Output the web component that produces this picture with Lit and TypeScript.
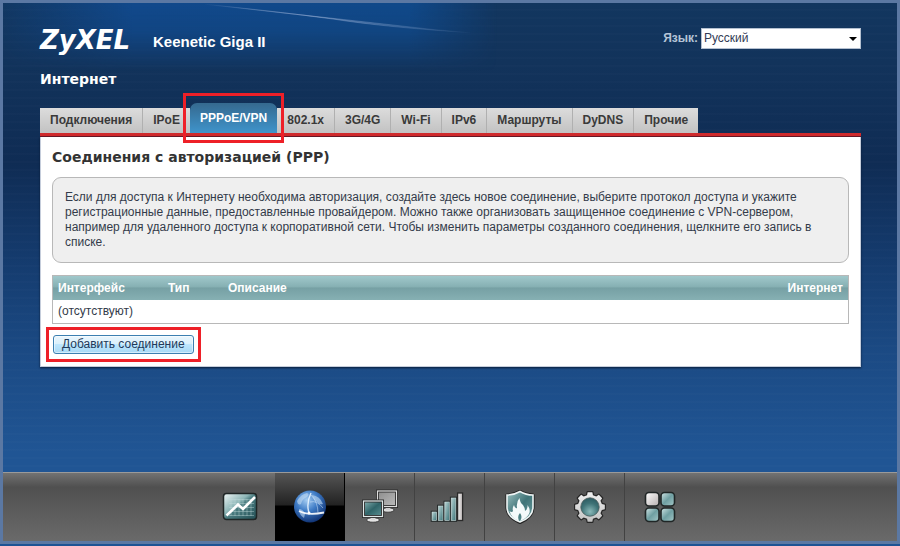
import { LitElement, html, css, svg, nothing } from "lit";
import { customElement, state } from "lit/decorators.js";
import { classMap } from "lit/directives/class-map.js";

const TABS = ["Подключения", "IPoE", "PPPoE/VPN", "802.1x", "3G/4G", "Wi-Fi", "IPv6", "Маршруты", "DyDNS", "Прочие"];

const gearPath = (() => {
  const n = 8;
  const pts: string[] = [];
  const at = (r: number, deg: number) => {
    const a = (deg * Math.PI) / 180;
    return `${(20 + r * Math.cos(a)).toFixed(2)} ${(20 + r * Math.sin(a)).toFixed(2)}`;
  };
  for (let i = 0; i < n; i++) {
    const c = (i * 360) / n;
    pts.push(at(12.2, c - 14), at(15, c - 9), at(15, c + 9), at(12.2, c + 14));
  }
  return "M" + pts.join("L") + "Z";
})();

const ICONS = [
  {
    label: "Системный монитор",
    art: svg`
      <defs><linearGradient id="m" x1="0" y1="0" x2="1" y2="1"><stop offset="0" stop-color="#f2f8f8"/><stop offset=".4" stop-color="#8db6b7"/><stop offset=".5" stop-color="#4a7c80"/><stop offset="1" stop-color="#234f55"/></linearGradient></defs>
      <rect x="3.5" y="6.5" width="33" height="26" rx="3" fill="url(#m)" stroke="#1f2626" stroke-width="1.5"/>
      <path d="M11 12v17M15 12v17M19 12v17M23 12v17M27 12v17M31 12v17M9 12.500h25M9 16.500h25M9 20.500h25M9 24.500h25M9 28.500h25" stroke="#c5dede" stroke-opacity=".5" stroke-width=".8" fill="none"/>
      <path d="M6.500 28.500L18 17.500L23 22L35 10" fill="none" stroke="#fff" stroke-width="2.600"/>`,
  },
  {
    label: "Интернет",
    art: svg`
      <defs><radialGradient id="g" cx=".4" cy=".3" r=".75"><stop offset="0" stop-color="#a5cdf2"/><stop offset=".45" stop-color="#3f7cc6"/><stop offset="1" stop-color="#0c2c6c"/></radialGradient></defs>
      <circle cx="20" cy="19.500" r="16" fill="url(#g)"/>
      <path d="M7 14Q11 7 17 6Q20 7 17 10Q12 12 11 17Q8 19 7 14ZM22 8Q30 9 33 17Q29 18 27 15Q23 13 22 8ZM9 22Q13 22 15 27L14 31Q9 28 9 22Z" fill="#c3dcf4" fill-opacity=".6"/>
      <path d="M21 6Q16 16 19 26" fill="none" stroke="#e8f4ff" stroke-width="1.400" stroke-opacity=".9"/>
      <path d="M9 24Q18 29 34 25.500" fill="none" stroke="#fff" stroke-width="1.800" stroke-opacity=".9"/>
      <path d="M21 8Q28 15 28 26M20 15Q27 13 33 21" fill="none" stroke="#d0e5fa" stroke-width=".9" stroke-opacity=".6"/>
      <circle cx="19" cy="26" r="1.500" fill="#fff"/>`,
  },
  {
    label: "Домашняя сеть",
    art: svg`
      <defs>
        <linearGradient id="a" x1="0" y1="0" x2="1" y2="1"><stop offset="0" stop-color="#8b8b8b"/><stop offset="1" stop-color="#bdbdbd"/></linearGradient>
        <linearGradient id="b" x1="0" y1="0" x2="1" y2="1"><stop offset="0" stop-color="#8ab5b5"/><stop offset=".5" stop-color="#2f6468"/><stop offset="1" stop-color="#5f9496"/></linearGradient>
      </defs>
      <ellipse cx="28" cy="23" rx="6" ry="2.200" fill="#ddd" stroke="#303030" stroke-width=".8"/>
      <rect x="26" y="20" width="4" height="3" fill="#d0d0d0"/>
      <rect x="17.500" y="4" width="19" height="15.500" fill="url(#a)" stroke="#2c2c2c" stroke-width="3"/>
      <rect x="17.500" y="4" width="19" height="15.500" fill="none" stroke="#dedede" stroke-width="1.200"/>
      <ellipse cx="13" cy="33" rx="6.500" ry="2.200" fill="#e4e4e4" stroke="#303030" stroke-width=".8"/>
      <rect x="11" y="30" width="4" height="3" fill="#d8d8d8"/>
      <rect x="3.500" y="14" width="19" height="15.500" fill="url(#b)" stroke="#2c2c2c" stroke-width="3"/>
      <rect x="3.500" y="14" width="19" height="15.500" fill="none" stroke="#dfe8e8" stroke-width="1.200"/>`,
  },
  {
    label: "Сеть Wi-Fi",
    art: svg`
      <defs>
        <linearGradient id="s" x1="0" y1="0" x2="1" y2="1"><stop offset="0" stop-color="#b8d4d4"/><stop offset="1" stop-color="#3d7478"/></linearGradient>
        <linearGradient id="t" x1="0" y1="0" x2="1" y2="0"><stop offset="0" stop-color="#f2f2f2"/><stop offset="1" stop-color="#bcb6b6"/></linearGradient>
      </defs>
      ${[[2, 25], [8.4, 19], [14.8, 15], [21.2, 11]].map(
        ([x, y]) => svg`<rect x=${x} y=${y} width="4.600" height=${33.5 - y} fill="url(#s)" stroke="#242a2a" stroke-width="2.600"/><rect x=${x} y=${y} width="4.600" height=${33.5 - y} fill="url(#s)" stroke="#cfe0e0" stroke-width=".6"/>`
      )}
      <rect x="27.600" y="6" width="5" height="27.500" fill="url(#t)" stroke="#2a2a2a" stroke-width="1.300"/>`,
  },
  {
    label: "Безопасность",
    art: svg`
      <defs><linearGradient id="h" x1="0" y1="0" x2="1" y2="1"><stop offset="0" stop-color="#9cc0c0"/><stop offset=".5" stop-color="#3f7478"/><stop offset="1" stop-color="#6fa0a2"/></linearGradient></defs>
      <path d="M20 4.500Q26 8 33 8V20Q33 30 20 35.500Q7 30 7 20V8Q14 8 20 4.500Z" fill="url(#h)" stroke="#222" stroke-width="3.200" stroke-linejoin="round"/>
      <path d="M20 4.500Q26 8 33 8V20Q33 30 20 35Q7 30 7 20V8Q14 8 20 4.500Z" fill="url(#h)" stroke="#eef4f4" stroke-width="1.600"/>
      <path d="M19 34Q11 31 9.500 24Q12 26 13 24Q12 21 14 18Q15 22 17 21Q16 15 19.500 11Q20 16 23 18Q25 21 25 24Q28 22 27.500 18Q31 23 29 27Q26 32 20 34Q23 30 20 26Q17 29 19 34Z" fill="#f4fafa"/>`,
  },
  {
    label: "Система",
    art: svg`
      <defs>
        <radialGradient id="c" cx=".5" cy=".75" r=".75"><stop offset="0" stop-color="#8ab9b9"/><stop offset=".6" stop-color="#3f7377"/><stop offset="1" stop-color="#2b5a60"/></radialGradient>
        <linearGradient id="d" x1="0" y1="0" x2="0" y2="1"><stop offset="0" stop-color="#f0f0f0"/><stop offset="1" stop-color="#c4c4c4"/></linearGradient>
      </defs>
      <path d=${gearPath} fill="url(#d)" stroke="#262626" stroke-width="2.400" stroke-linejoin="round"/>
      <path d=${gearPath} fill="url(#d)"/>
      <circle cx="20" cy="20" r="9.200" fill="url(#c)" stroke="#4a5a5a" stroke-width=".8"/>`,
  },
  {
    label: "Приложения",
    art: svg`
      <defs>
        <linearGradient id="p" x1="0" y1="0" x2="1" y2="1"><stop offset="0" stop-color="#d2e6e6"/><stop offset=".5" stop-color="#6f9fa2"/><stop offset="1" stop-color="#a5c8c8"/></linearGradient>
        <linearGradient id="q" x1="0" y1="0" x2="1" y2="1"><stop offset="0" stop-color="#fff"/><stop offset="1" stop-color="#b5aeae"/></linearGradient>
      </defs>
      ${[[5.5, 5.5], [21, 5.5], [5.5, 21], [21, 21]].map(
        ([x, y], i) => svg`<rect x=${x} y=${y} width="13.500" height="13.500" rx="3.500" fill="url(#${i ? "p" : "q"})" stroke="#202626" stroke-width="1.600"/>`
      )}`,
  },
];

@customElement("nav-icon")
class NavIcon extends LitElement {
  static properties = { index: { type: Number } };
  declare index: number;
  static styles = css`
    :host { display: block; width: 40px; height: 40px; }
    .art { display: block; width: 40px; height: 40px; }
  `;
  render() {
    return html`<svg class="art" viewBox="0 0 40 40" aria-hidden="true">${ICONS[this.index].art}</svg>`;
  }
}

@customElement("app-root")
class AppRoot extends LitElement {
  @state() private tab = 2;
  @state() private section = 1;

  static styles = css`
    :host {
      display: block;
      font-family: "Liberation Sans", Arial, sans-serif;
      font-size: 12px;
      line-height: 15px;
      color: #333b4a;
    }
    * { box-sizing: border-box; }
    .screen {
      min-height: 100vh;
      padding-bottom: 2px;
      background: #1d5394;
      display: flex;
    }
    .frame {
      position: relative;
      flex: 1;
      min-width: 0;
      border: 3px solid #5b78a3;
      display: flex;
      flex-direction: column;
      background:
        repeating-linear-gradient(rgba(255, 255, 255, 0) 0 6px, rgba(255, 255, 255, 0.01) 6px 8px),
        linear-gradient(#12365f 0, #12335b 60px, #0f2c54 160px, #143a6c 250px, #1b4a84 350px, #205594 450px);
    }
    .glow { position: absolute; left: 0; top: 0; width: 520px; height: 80px; }
    .page { position: relative; flex: 1; padding: 25px 36px 24px 37px; }
    .header { display: flex; align-items: flex-start; height: 26px; }
    .logo {
      font: italic bold 26px/24px "DejaVu Sans", Verdana, sans-serif;
      color: #fff;
      margin: 0;
      width: 113px;
    }
    .model { flex: 1; font-size: 15px; line-height: 27px; font-weight: bold; color: #fff; }
    .language { font-weight: bold; line-height: 21px; color: #b6c5d8; margin-right: 3px; }
    .picker { position: relative; width: 160px; height: 21px; }
    .select {
      appearance: none;
      width: 100%;
      height: 21px;
      border: 1px solid #b4c0d0;
      border-radius: 0;
      background: #fff;
      color: #333b55;
      font: inherit;
      padding: 0 16px 0 2px;
    }
    .arrow {
      position: absolute;
      right: 4px;
      top: 9px;
      border: 4px solid transparent;
      border-top-color: #000;
      border-bottom-width: 0;
      pointer-events: none;
    }
    .section {
      margin: 16px 0 0;
      font: bold 14px/18px "DejaVu Sans", Verdana, sans-serif;
      color: #fff;
    }
    .tabs { display: flex; align-items: flex-end; height: 30px; margin-top: 15px; }
    .tab {
      position: relative;
      height: 25px;
      padding: 0 10px;
      border: 0;
      border-right: 1px solid #b0b0b0;
      background: linear-gradient(#dcdcdc, #c2c2c2);
      color: #3a3a3a;
      font: bold 12px/15px "Liberation Sans", Arial, sans-serif;
      white-space: nowrap;
    }
    .tab:last-child, .tab.before { border-right: 0; }
    .tab.active {
      height: 30px;
      border: 0;
      border-radius: 7px 7px 0 0;
      background: linear-gradient(#35698f, #3f94cb);
      color: #fff;
    }
    .mark {
      position: absolute;
      z-index: 1;
      inset: -10px -7px;
      border: 3px solid #ee2028;
      pointer-events: none;
    }
    .mark.wide { inset: -8px -7px; }
    .rule { height: 4px; background: #cf2a2c; border-bottom: 1px solid #6d1724; }
    .panel {
      border: 1px solid #c5cddb;
      border-top: 0;
      background: #fff;
      box-shadow: 0 1px 2px #0a1c38;
      padding: 13px 11px 12px;
    }
    .title {
      margin: 0 0 12px;
      font: bold 14px/15px "DejaVu Sans", Verdana, sans-serif;
      color: #333;
    }
    .info {
      margin: 0 0 12px;
      padding: 12px;
      border: 1px solid #b8b8b8;
      border-radius: 9px;
      background: #efefef;
    }
    .table {
      width: 100%;
      border: 1px solid #b8b8b8;
      border-spacing: 0;
      table-layout: fixed;
      margin-bottom: 11px;
    }
    .head { background: linear-gradient(#a0c8cb, #86b0b3 45%, #76a0a4 50%, #86b0b3); }
    .th { height: 24px; padding: 0 5px; text-align: left; color: #fff; }
    .th.iface { width: 110px; }
    .th.type { width: 60px; }
    .th.net { width: 90px; text-align: right; }
    .td { height: 23px; padding: 0 5px; }
    .action { position: relative; display: inline-block; vertical-align: top; margin-left: 1px; }
    .button {
      display: block;
      height: 19px;
      padding: 0 8px;
      border: 1px solid #3c7fb1;
      border-radius: 3px;
      background: linear-gradient(#eaf6fd, #d9f0fc 49%, #bee6fd 50%, #a7d9f5);
      box-shadow: inset 0 0 0 1px rgba(255, 255, 255, 0.5);
      color: #223a5a;
      font: 12px/15px "Liberation Sans", Arial, sans-serif;
    }
    .nav {
      display: flex;
      justify-content: center;
      height: 69px;
      border-top: 1px solid #9a9a9a;
      background: linear-gradient(#727272, #505050 14px, #6a6a6a);
    }
    .item {
      display: flex;
      align-items: center;
      justify-content: center;
      width: 70px;
      height: 68px;
      padding: 0;
      border: 0;
      border-right: 1px solid #424242;
      background: none;
    }
    .item:first-child, .item:last-child { border-color: transparent; }
    .item.current { border-color: #000; background: linear-gradient(#555, #222 32px, #000 33px); }
  `;

  render() {
    return html`
      <div class="screen"><div class="frame">
        <svg class="glow" viewBox="0 0 520 80" aria-hidden="true">
          <defs>
            <linearGradient id="fall" x1="0" y1="0" x2="0" y2="1"><stop offset="0" stop-color="#fff"/><stop offset=".35" stop-color="#fff" stop-opacity=".8"/><stop offset=".85" stop-color="#fff" stop-opacity="0"/></linearGradient>
            <linearGradient id="span" x1="0" y1="0" x2="1" y2="0"><stop offset="0" stop-color="#11498c" stop-opacity=".1"/><stop offset=".25" stop-color="#11498c"/><stop offset=".78" stop-color="#10498a"/><stop offset=".95" stop-color="#10498a" stop-opacity="0"/></linearGradient>
            <linearGradient id="ray" x1="0" y1="0" x2="1" y2="0"><stop offset="0" stop-color="#8fa8d0" stop-opacity="0"/><stop offset=".4" stop-color="#8fa8d0" stop-opacity=".5"/><stop offset="1" stop-color="#8fa8d0" stop-opacity="0"/></linearGradient>
            <mask id="fade"><rect width="520" height="80" fill="url(#fall)"/></mask>
          </defs>
          <rect width="520" height="80" fill="url(#span)" mask="url(#fade)"/>
          <path d="M200 1Q290 11 390 22Q430 27 470 30Q380 24 330 16Q270 8 200 1Z" fill="url(#ray)" stroke="url(#ray)" stroke-width="1"/>
        </svg>
        <main class="page">
          <header class="header">
            <h1 class="logo">ZyXEL</h1>
            <div class="model">Keenetic Giga II</div>
            <label class="language" for="lang">Язык:</label>
            <div class="picker">
              <select class="select" id="lang"><option>Русский</option></select>
              <span class="arrow"></span>
            </div>
          </header>
          <h2 class="section">Интернет</h2>
          <div class="tabs" role="tablist">
            ${TABS.map(
              (name, i) => html`<button
                role="tab"
                aria-selected=${this.tab === i}
                class=${classMap({ tab: true, active: this.tab === i, before: this.tab === i + 1 })}
                @click=${() => (this.tab = i)}
              >${name}${i === 2 ? html`<span class="mark"></span>` : nothing}</button>`
            )}
          </div>
          <div class="rule"></div>
          <section class="panel">
            <h3 class="title">Соединения с авторизацией (PPP)</h3>
            <p class="info">Если для доступа к Интернету необходима авторизация, создайте здесь новое соединение, выберите протокол доступа и укажите регистрационные данные, предоставленные провайдером. Можно также организовать защищенное соединение с VPN-сервером, например для удаленного доступа к корпоративной сети. Чтобы изменить параметры созданного соединения, щелкните его запись в списке.</p>
            <table class="table">
              <thead><tr class="head">
                <th class="th iface">Интерфейс</th><th class="th type">Тип</th><th class="th">Описание</th><th class="th net">Интернет</th>
              </tr></thead>
              <tbody><tr><td class="td" colspan="4">(отсутствуют)</td></tr></tbody>
            </table>
            <div class="action">
              <button class="button">Добавить соединение</button>
              <span class="mark wide"></span>
            </div>
          </section>
        </main>
        <nav class="nav">
          ${ICONS.map(
            (icon, i) => html`<button
              class=${classMap({ item: true, current: this.section === i })}
              aria-label=${icon.label}
              @click=${() => (this.section = i)}
            ><nav-icon .index=${i}></nav-icon></button>`
          )}
        </nav>
      </div></div>
    `;
  }
}
